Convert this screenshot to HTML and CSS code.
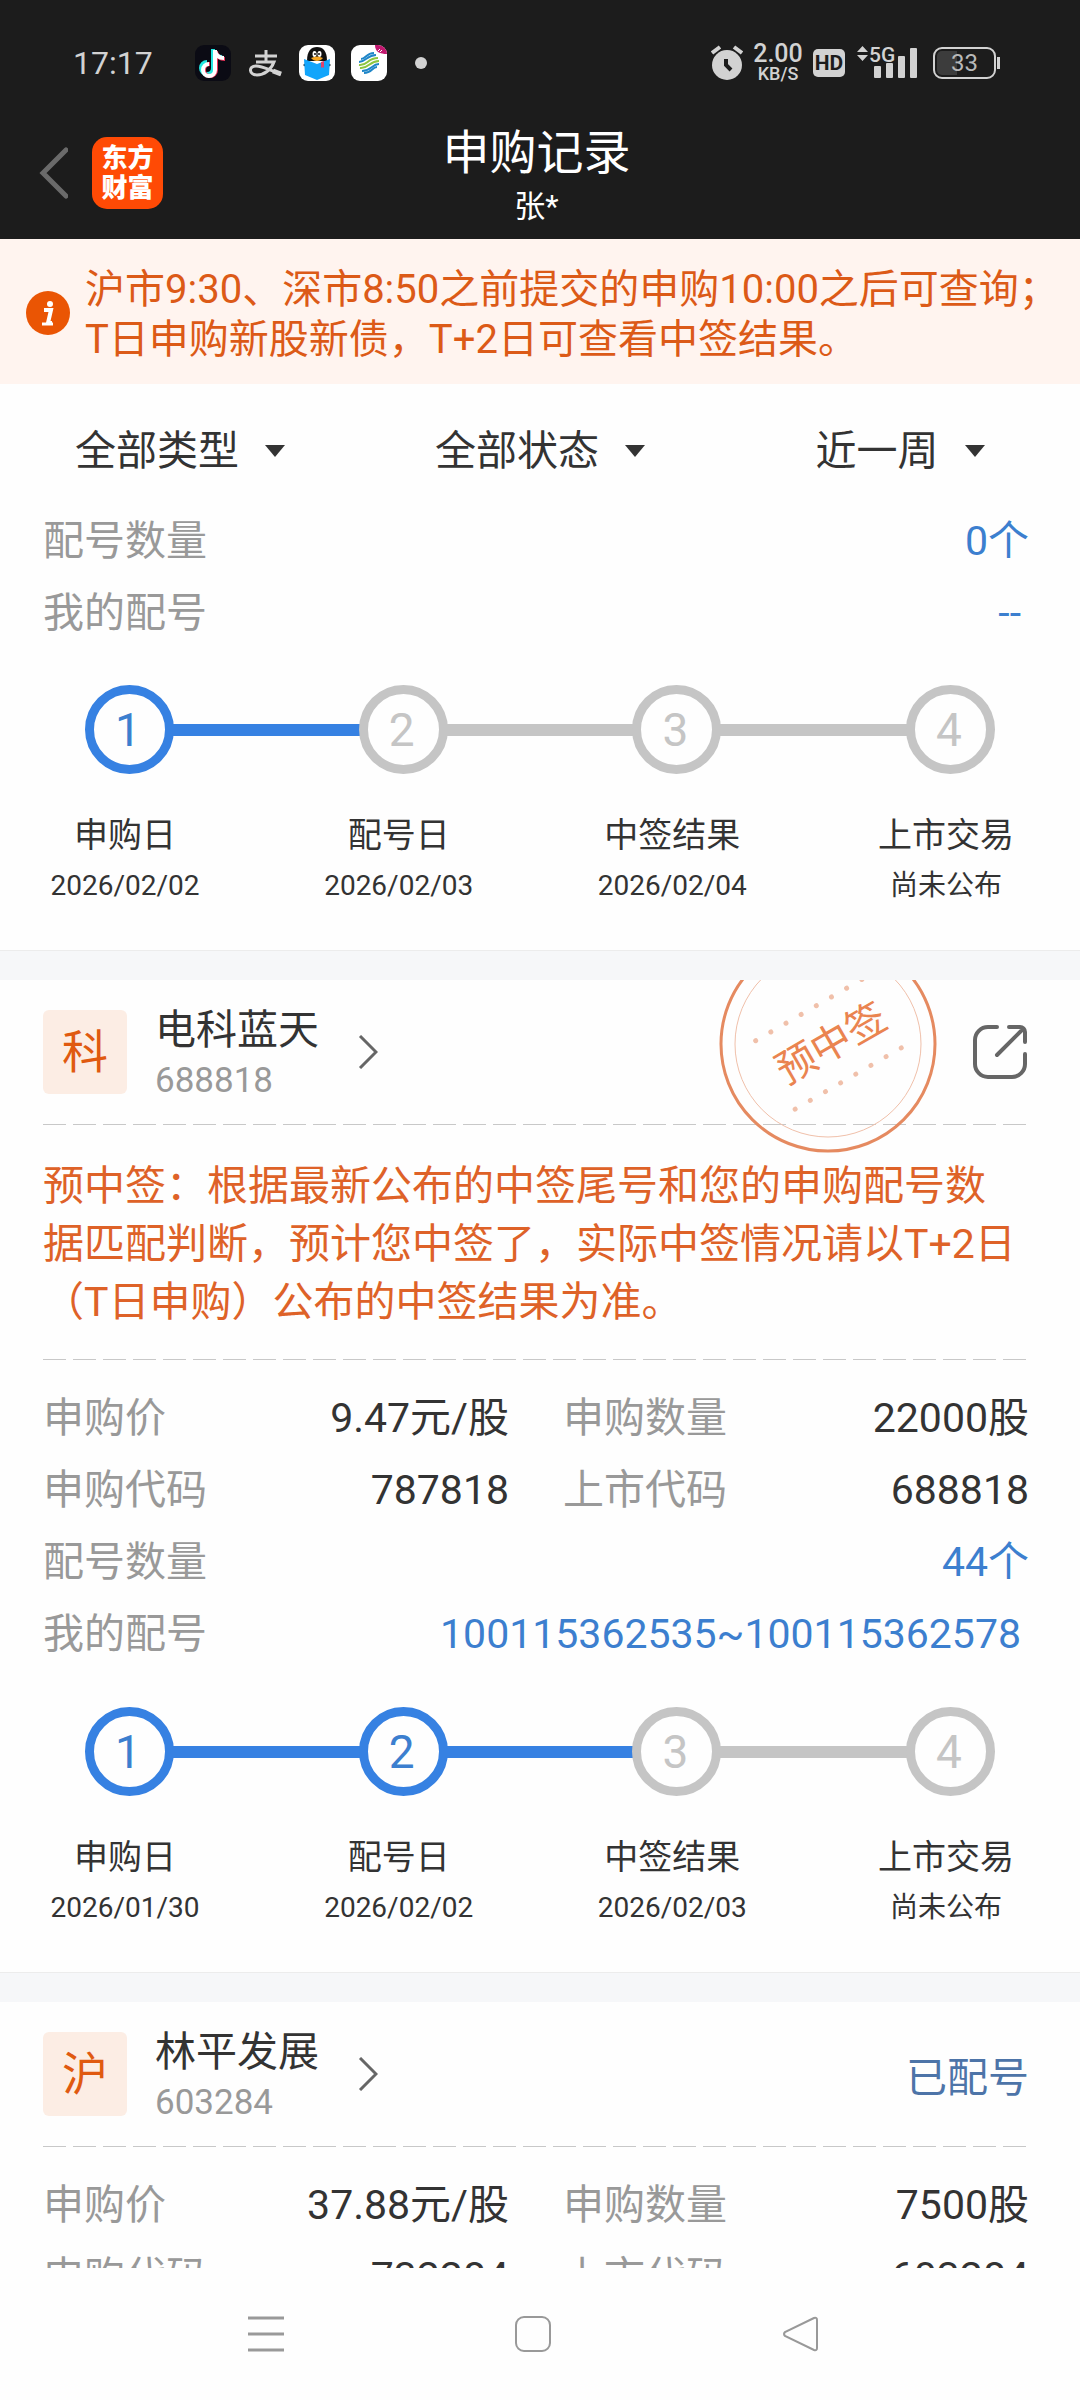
FILE: index.html
```html
<!DOCTYPE html>
<html lang="zh-CN">
<head>
<meta charset="utf-8">
<meta name="viewport" content="width=device-width, initial-scale=1">
<title>申购记录</title>
<link rel="stylesheet" href="styles.css">
</head>
<body>
<div class="app">
  <div class="statusbar">
    <span class="clock">17:17</span>
    <div class="notifications">
      <svg class="tray" viewBox="0 0 36 36"><rect width="36" height="36" rx="9" fill="#0b0b14"/><g fill="none" stroke-width="4"><path d="M19 5v19a6 6 0 1 1-6-6M19 6c1 4 4 7 9 7" stroke="#25e6e0" transform="translate(-1 -1)"/><path d="M19 5v19a6 6 0 1 1-6-6M19 6c1 4 4 7 9 7" stroke="#f0335a" transform="translate(2 1)"/><path d="M20 5v20a6 6 0 1 1-6-6M20 6c1 4 4 7 9 7" stroke="#fff"/></g></svg>
      <svg class="tray" viewBox="0 0 36 36" fill="none" stroke="#d2d2d2"><path d="M8 11h22M19 5v12" stroke-width="3"/><path d="M9 17h18c-3 8-10 13-17 13-8 0-9-9-1-9 8 0 14 5 25 8" stroke-width="3"/><path d="M26 26l8 3" stroke-width="5"/></svg>
      <svg class="tray" viewBox="0 0 36 36"><rect width="36" height="36" rx="9" fill="#fff"/><path d="M4 20l4-3v6zM32 20l-4-3v6z" fill="#111"/><path d="M8 16C8 6 12 2 18 2s10 4 10 14z" fill="#111"/><ellipse cx="15.500" cy="9" rx="2" ry="3" fill="#fff"/><ellipse cx="20.500" cy="9" rx="2" ry="3" fill="#fff"/><circle cx="16" cy="9" r="1" fill="#111"/><circle cx="20" cy="9" r="1" fill="#111"/><path d="M12 13c4-2 8-2 12 0-3 4-9 4-12 0z" fill="#f5a623"/><path d="M5 14l13 5 13-5-1 16-12 5-12-5z" fill="#12a5fb"/><path d="M22 17l3-1v7l-1.500-1-1.500 1z" fill="#e0436c"/></svg>
      <svg class="tray" viewBox="0 0 36 36"><rect width="36" height="36" rx="9" fill="#fff"/><path d="M24 0h3a9 9 0 0 1 9 9c-7 0-12-2-12-9z" fill="#c2186f"/><path d="M27 6l2-2M29 7l2-2" stroke="#fff" stroke-width="1"/><g fill="none" stroke="#1f86c8" stroke-width="2"><path d="M10 14c5 0 5-6 13-6"/><path d="M8 17c7 0 8-7 17-7"/><path d="M26 22c-5 0-5 6-13 6"/><path d="M28 19c-7 0-8 7-17 7"/></g><path d="M8 20c9 1 8-7 19-7M9 23c9 1 9-7 19-7" fill="none" stroke="#8cc63f" stroke-width="2"/></svg>
      <i class="more-dot"></i>
    </div>
    <div class="indicators">
      <svg class="alarm" viewBox="0 0 32 36"><circle cx="16" cy="20" r="15" fill="#d2d2d2"/><path d="M1 8l8-6M31 8l-8-6" stroke="#d2d2d2" stroke-width="4"/><path d="M15 14v6l5 5" fill="none" stroke="#1c1c1c" stroke-width="4"/></svg>
      <span class="speed"><b>2.00</b><small>KB/S</small></span>
      <span class="hd">HD</span>
      <svg class="signal" viewBox="0 0 60 36" fill="#d2d2d2"><path d="M0 7l5.500-6L11 7zM0 10l5.500 6L11 10z"/><text x="12" y="17" class="net">5G</text><rect x="17" y="21" width="7" height="12" rx="1"/><rect x="29" y="18" width="7" height="15" rx="1"/><rect x="41" y="11" width="7" height="22" rx="1"/><rect x="53" y="3" width="7" height="30" rx="1"/></svg>
      <span class="battery"><span class="cell">33</span></span>
    </div>
  </div>

  <header class="topbar">
    <div class="topbar-left">
      <button class="back" type="button" aria-label="返回"><svg viewBox="0 0 29 52"><path d="M27 3L4 26l23 23" fill="none" stroke="#6a6a6a" stroke-width="5" stroke-linecap="round"/></svg></button>
      <span class="logo"><span>东方</span><span>财富</span></span>
    </div>
    <div class="heading">
      <h1>申购记录</h1>
      <p>张*</p>
    </div>
  </header>

  <div class="notice">
    <svg class="info" viewBox="0 0 44 44"><circle cx="22" cy="22" r="22" fill="#ea5504"/><circle cx="24" cy="13" r="3" fill="#fff"/><path d="M18 19h7l-3 13h4" fill="none" stroke="#fff" stroke-width="4"/><path d="M16 33h11" stroke="#fff" stroke-width="3"/></svg>
    <p>沪市9:30、深市8:50之前提交的申购10:00之后可查询；<br>T日申购新股新债，T+2日可查看中签结果。</p>
  </div>

  <form class="filters">
    <label><select aria-label="类型"><option>全部类型</option></select><i class="caret"></i></label>
    <label><select aria-label="状态"><option>全部状态</option></select><i class="caret"></i></label>
    <label><select aria-label="时间"><option>近一周</option></select><i class="caret"></i></label>
  </form>

  <main class="records">
    <section class="card">
      <dl class="fields">
        <div class="wide"><dt>配号数量</dt><dd class="link">0个</dd></div>
        <div class="wide"><dt>我的配号</dt><dd class="link numbers">--</dd></div>
      </dl>
      <div class="track">
        <span class="dot done">1</span><i class="bar done"></i><span class="dot">2</span><i class="bar"></i><span class="dot">3</span><i class="bar"></i><span class="dot">4</span>
      </div>
      <ol class="stages">
        <li>申购日<time>2026/02/02</time></li>
        <li>配号日<time>2026/02/03</time></li>
        <li>中签结果<time>2026/02/04</time></li>
        <li>上市交易<time>尚未公布</time></li>
      </ol>
    </section>

    <div class="divider"></div>

    <section class="card">
      <div class="stock">
        <span class="board">科</span>
        <div class="name"><h2>电科蓝天</h2><p>688818</p></div>
        <svg class="chevron" viewBox="0 0 20 34"><path d="M2 1l16 16L2 33" fill="none" stroke="#666" stroke-width="3"/></svg>
        <button class="share" type="button" aria-label="分享"><svg viewBox="0 0 54 54" fill="none" stroke="#666" stroke-width="4" stroke-linecap="round"><path d="M24 2H15A13 13 0 0 0 2 15v24a13 13 0 0 0 13 13h24a13 13 0 0 0 13-13V29"/><path d="M36 2h11a5 5 0 0 1 5 5v10M24 30L50 4"/></svg></button>
      </div>
      <svg class="stamp" viewBox="0 0 220 220">
        <circle cx="110" cy="110" r="107" fill="none" stroke="#e58a60" stroke-width="3"/>
        <circle cx="110" cy="110" r="93" fill="none" stroke="#f0c0aa" stroke-width="1"/>
        <g transform="rotate(-30 110 110)">
          <path d="M49 71h124M49 150h124" fill="none" stroke="#f0c0aa" stroke-width="5" stroke-linecap="round" stroke-dasharray="0 17.500"/>
          <text x="113" y="125" text-anchor="middle">预中签</text>
        </g>
      </svg>
      <hr>
      <p class="forecast">预中签：根据最新公布的中签尾号和您的申购配号数据匹配判断，预计您中签了，实际中签情况请以T+2日（T日申购）公布的中签结果为准。</p>
      <hr>
      <dl class="fields">
        <div><dt>申购价</dt><dd>9.47元/股</dd></div>
        <div><dt>申购数量</dt><dd>22000股</dd></div>
        <div><dt>申购代码</dt><dd>787818</dd></div>
        <div><dt>上市代码</dt><dd>688818</dd></div>
        <div class="wide"><dt>配号数量</dt><dd class="link">44个</dd></div>
        <div class="wide"><dt>我的配号</dt><dd class="link numbers">100115362535~100115362578</dd></div>
      </dl>
      <div class="track">
        <span class="dot done">1</span><i class="bar done"></i><span class="dot done">2</span><i class="bar done"></i><span class="dot">3</span><i class="bar"></i><span class="dot">4</span>
      </div>
      <ol class="stages">
        <li>申购日<time>2026/01/30</time></li>
        <li>配号日<time>2026/02/02</time></li>
        <li>中签结果<time>2026/02/03</time></li>
        <li>上市交易<time>尚未公布</time></li>
      </ol>
    </section>

    <div class="divider"></div>

    <section class="card">
      <div class="stock">
        <span class="board">沪</span>
        <div class="name"><h2>林平发展</h2><p>603284</p></div>
        <svg class="chevron" viewBox="0 0 20 34"><path d="M2 1l16 16L2 33" fill="none" stroke="#666" stroke-width="3"/></svg>
        <span class="state">已配号</span>
      </div>
      <hr>
      <dl class="fields">
        <div><dt>申购价</dt><dd>37.88元/股</dd></div>
        <div><dt>申购数量</dt><dd>7500股</dd></div>
        <div><dt>申购代码</dt><dd>732284</dd></div>
        <div><dt>上市代码</dt><dd>603284</dd></div>
      </dl>
    </section>
  </main>

  <nav class="sysnav">
    <button type="button" aria-label="最近任务"><svg viewBox="0 0 36 36"><path d="M0 2h36M0 18h36M0 34h36" stroke="#999" stroke-width="3"/></svg></button>
    <button type="button" aria-label="主屏幕"><svg viewBox="0 0 36 36"><rect x="1" y="1" width="34" height="34" rx="8" fill="none" stroke="#999" stroke-width="2"/></svg></button>
    <button type="button" aria-label="返回上一级"><svg viewBox="0 0 36 36"><path d="M32 2L3 16q-2 2 0 4l29 14q3 1 3-2V4q0-3-3-2z" fill="none" stroke="#999" stroke-width="2"/></svg></button>
  </nav>
</div>
</body>
</html>
```
FILE: styles.css
```css
* { box-sizing: border-box; }

body, h1, h2, p, dl, dd, ol { margin: 0; padding: 0; }

body {
  background: #fefefe;
  color: #333;
  font-family: Roboto, "Noto Sans CJK SC", sans-serif;
  font-size: 41px;
}

h1, h2 { font-weight: 400; }

button { border: 0; padding: 0; background: none; }

svg { display: block; }

.app {
  display: flex;
  flex-direction: column;
  height: 100vh;
}

/* system status bar */
.statusbar {
  display: flex;
  align-items: center;
  height: 125px;
  flex: none;
  padding: 0 80px 0 73px;
  background: #1c1c1c;
  color: #d2d2d2;
}

.clock { width: 122px; font-size: 32px; }

.notifications { display: flex; align-items: center; gap: 16px; }

.tray { width: 36px; height: 36px; }

.more-dot {
  width: 12px;
  height: 12px;
  margin-left: 12px;
  border-radius: 50%;
  background: #d2d2d2;
}

.indicators { display: flex; align-items: center; gap: 10px; margin-left: auto; }

.alarm { width: 32px; height: 36px; }

.speed { display: flex; flex-direction: column; width: 50px; text-align: center; }
.speed b { font-size: 25px; line-height: 22px; font-weight: 500; }
.speed small { font-size: 18px; line-height: 18px; font-weight: 500; }

.hd {
  width: 32px;
  height: 28px;
  border-radius: 5px;
  background: #d2d2d2;
  color: #1c1c1c;
  font-size: 21px;
  font-weight: 700;
  line-height: 28px;
  text-align: center;
}

.signal { width: 60px; height: 36px; margin: 0 6px 0 2px; overflow: visible; }
.net { font-size: 21px; font-weight: 500; }

.battery { display: flex; align-items: center; }
.battery::after {
  content: "";
  width: 3px;
  height: 12px;
  margin-left: 1px;
  background: #d2d2d2;
}
.cell {
  width: 63px;
  height: 32px;
  border: 2px solid #d2d2d2;
  border-radius: 9px;
  background: linear-gradient(to right, #3c3c3c 36%, transparent 36%) content-box;
  padding: 2px;
  font-size: 24px;
  line-height: 24px;
  text-align: center;
  color: #b8b8b8;
}

/* title bar */
.topbar {
  display: grid;
  grid-template-columns: 1fr auto 1fr;
  align-items: start;
  flex: none;
  padding: 0 46px 6px 39px;
  background: #1c1c1c;
  color: #fff;
}

.topbar-left { display: flex; align-items: center; gap: 24px; padding-top: 12px; }

.back svg { width: 29px; height: 52px; }

.logo {
  display: grid;
  align-content: center;
  width: 71px;
  height: 72px;
  border-radius: 15px;
  background: #ff4a05;
  color: #fff;
  font-size: 26px;
  font-weight: 900;
  line-height: 30px;
  text-align: center;
}

.heading { text-align: center; }
.heading h1 { font-size: 47px; line-height: 56px; }
.heading p { font-size: 31px; line-height: 52px; }

/* notice strip */
.notice {
  display: flex;
  align-items: center;
  gap: 15px;
  flex: none;
  padding: 24px 26px 21px;
  background: #fff4ef;
  color: #dc5a17;
}
.notice p { padding-top: 2px; margin-bottom: -2px; font-size: 40px; line-height: 50px; white-space: nowrap; }
.info { width: 44px; height: 44px; flex: none; }

/* filters */
.filters {
  display: grid;
  grid-template-columns: repeat(3, 1fr);
  flex: none;
  padding: 37px 0 24px;
}
.filters label { display: flex; align-items: center; justify-content: center; gap: 26px; }
.filters select {
  appearance: none;
  border: 0;
  padding: 0;
  background: none;
  color: inherit;
  font: inherit;
  line-height: 60px;
}
.caret {
  border: 10px solid transparent;
  border-top: 12px solid #333;
  border-bottom: 0;
}

/* record list */
.records { flex: 1; min-height: 0; overflow: hidden; }

.card { position: relative; overflow: hidden; padding: 0 51px 0 43px; background: #fefefe; }

.divider {
  height: 30px;
  border-top: 1px solid #ececec;
  background: #f6f7f9;
}

.fields { display: grid; grid-template-columns: 1fr 1fr; column-gap: 54px; }
.fields div { display: flex; justify-content: space-between; line-height: 72px; }
.fields .wide { grid-column: 1 / -1; }
.fields dt { color: #999; }
.fields .link { color: #3c7fcf; }
.fields .numbers { padding-right: 8px; }
hr + .fields { padding: 22px 0 1px; }

.track { display: flex; align-items: center; padding: 36px 34px 0 42px; }
.dot {
  width: 89px;
  height: 89px;
  flex: none;
  border: 9px solid #c5c5c5;
  border-radius: 50%;
  padding-right: 3px;
  color: #c5c5c5;
  font-size: 46px;
  line-height: 73px;
  text-align: center;
}
.dot.done { border-color: #3681e2; color: #3c7fcf; }
.bar { flex: 1; height: 12px; margin: 0 -1px; background: #c5c5c5; }
.bar.done { background: #3681e2; }

.stages {
  display: flex;
  justify-content: space-between;
  padding: 36px 6px 38px 5px;
  list-style: none;
  font-size: 34px;
  line-height: 50px;
}
.stages li { width: 154px; text-align: center; }
.stages time { display: block; font-size: 28px; line-height: 52px; }

.stock { display: flex; align-items: center; height: 144px; }
.board {
  width: 84px;
  height: 84px;
  border-radius: 6px;
  background: #fcede4;
  color: #e05a10;
  font-size: 46px;
  line-height: 84px;
  text-align: center;
}
.name { width: 203px; margin-left: 28px; padding-top: 4px; }
.name h2 { font-size: 41px; line-height: 54px; }
.name p { font-size: 35px; line-height: 48px; color: #999; }
.chevron { width: 20px; height: 34px; }
.share { margin-left: auto; margin-right: 2px; }
.share svg { width: 54px; height: 54px; }
.state { margin-left: auto; color: #4d74a8; }

.stamp {
  position: absolute;
  top: -46px;
  right: 142px;
  width: 220px;
  height: 220px;
}
.stamp text { fill: #ea8450; font-size: 40px; }

hr {
  height: 1px;
  margin: 0;
  border: 0;
  background: repeating-linear-gradient(to right, #c8c8c8 0 23px, transparent 23px 30px);
}

.forecast {
  padding: 32px 10px 28px 0;
  color: #de6228;
  line-height: 58px;
}

/* system navigation */
.sysnav {
  display: flex;
  justify-content: space-between;
  flex: none;
  padding: 48px 262px 48px 248px;
}
.sysnav svg { width: 36px; height: 36px; }
```
